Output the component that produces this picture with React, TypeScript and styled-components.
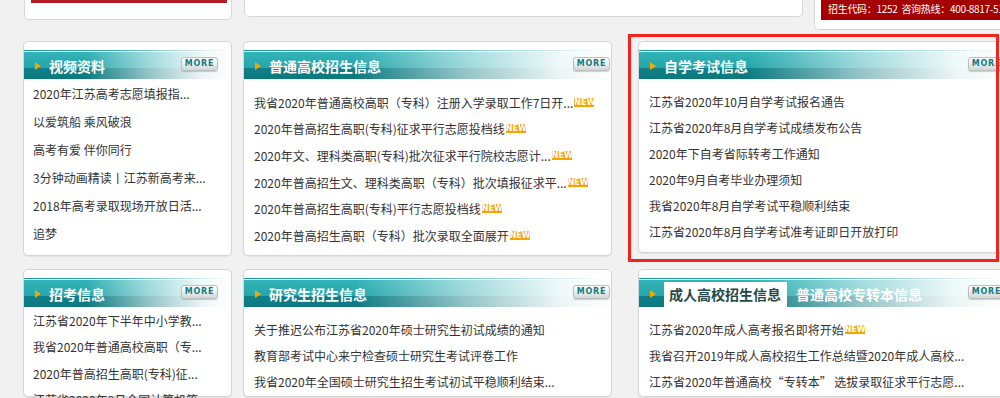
import React from 'react';
import styled, { createGlobalStyle } from 'styled-components';

const GlobalStyle = createGlobalStyle`
  html, body {
    margin: 0;
    padding: 0;
    background: #f1f1f1;
    overflow: hidden;
  }
  body {
    font-family: "Noto Sans CJK SC", "Noto Sans", sans-serif;
  }
  * {
    box-sizing: border-box;
  }
`;

const Page = styled.div`
  width: 1000px;
  height: 398px;
`;

const TopRow = styled.div`
  display: flex;
  align-items: flex-start;
  padding-left: 24px;
  height: 41px;
`;

const TopCard = styled.div<{ $w: number; $h: number; $ml: number }>`
  flex: none;
  width: ${(p) => p.$w}px;
  height: ${(p) => p.$h}px;
  margin-left: ${(p) => p.$ml}px;
  background: #fff;
  border: 1px solid #d6d6d6;
  border-top: none;
  border-radius: 0 0 5px 5px;
`;

const RedStrip = styled.div`
  height: 3px;
  margin: 0 4px 0 6px;
  background: #b21c22;
`;

const Banner = styled.div`
  height: 20px;
  margin-left: 6px;
  padding-left: 7px;
  background: #a50000;
  color: #fff;
  font-size: 10px;
  letter-spacing: -0.3px;
  line-height: 17px;
  white-space: nowrap;
  overflow: hidden;
`;

const Row = styled.div<{ $mt: number }>`
  display: flex;
  align-items: flex-start;
  gap: 11px;
  padding-left: 23px;
  margin-top: ${(p) => p.$mt}px;
`;

const Card = styled.div<{ $w: number; $h: number; $ml?: number; $highlight?: boolean }>`
  position: relative;
  flex: none;
  width: ${(p) => p.$w}px;
  height: ${(p) => p.$h}px;
  margin-left: ${(p) => p.$ml ?? 0}px;
  padding-top: 8px;
  background: #fff;
  border: 1px solid #d6d6d6;
  border-radius: 5px;
  box-shadow: 0 1px 0 #e2e2e2;

  ${(p) =>
    p.$highlight &&
    `
    &::after {
      content: '';
      position: absolute;
      left: -11px;
      top: -8px;
      right: 7px;
      bottom: -10px;
      border: 3px solid #f7231b;
      pointer-events: none;
    }
  `}
`;

const HeadLine = styled.div`
  padding-top: 2px;
  background: linear-gradient(to right, #14979c 0%, #37acb0 45%, #cfeced 85%, #ffffff 100%) top left / 100% 1px no-repeat;
`;

const Band = styled.div`
  display: flex;
  align-items: center;
  height: 27px;
  padding-left: 11px;
  background:
    linear-gradient(
      to right,
      rgba(255, 255, 255, 0) 0%,
      rgba(255, 255, 255, 0) 30%,
      rgba(255, 255, 255, 0.55) 60%,
      rgba(255, 255, 255, 0.92) 86%,
      #fff 100%
    ),
    linear-gradient(to bottom, #33b3b7 0%, #25a6ab 58%, #10818a 58%, #0c787d 100%);
`;

const Arrow = styled.span`
  flex: none;
  width: 0;
  height: 0;
  border-left: 6px solid #f2a800;
  border-top: 4.5px solid transparent;
  border-bottom: 4.5px solid transparent;
  margin-right: 8px;
`;

const Title = styled.span`
  color: #fff;
  font-size: 14px;
  font-weight: 700;
  line-height: 20px;
  white-space: nowrap;
`;

const Tab = styled.span<{ $active?: boolean }>`
  align-self: flex-end;
  height: 25px;
  padding: 0 6px 0 5px;
  margin-right: 4px;
  font-size: 14px;
  font-weight: 700;
  line-height: 24px;
  white-space: nowrap;
  color: ${(p) => (p.$active ? '#24484a' : '#fff')};
  background: ${(p) => (p.$active ? '#fff' : 'transparent')};
`;

const More = styled.span<{ $right: number }>`
  flex: none;
  align-self: flex-start;
  margin: 5px ${(p) => p.$right}px 0 auto;
  width: 37px;
  height: 14px;
  border: 1px solid #b9bfbf;
  border-radius: 3px;
  background: linear-gradient(to bottom, #ffffff 0%, #eef0f0 45%, #d2d6d6 100%);
  box-shadow: 0 1px 1px rgba(0, 0, 0, 0.18);
  color: #147a7f;
  font-family: "DejaVu Sans", sans-serif;
  font-size: 8px;
  font-weight: 700;
  letter-spacing: 0.8px;
  line-height: 12px;
  text-align: center;
`;

const List = styled.ul<{ $pt: number; $pl: number }>`
  list-style: none;
  margin: 0;
  padding: ${(p) => p.$pt}px 0 0 ${(p) => p.$pl}px;
`;

const Item = styled.li<{ $lh: number }>`
  display: flex;
  align-items: center;
  height: ${(p) => p.$lh}px;
  color: #333;
  font-size: 12px;
  white-space: nowrap;
`;

const NewBadge = styled.span`
  margin-left: 1px;
  width: 20px;
  height: 9px;
  background: #f6a500;
  color: #fff;
  font-family: "DejaVu Sans", sans-serif;
  font-size: 8px;
  font-weight: 700;
  line-height: 9px;
  text-align: center;
`;

type Link = { text: string; isNew?: boolean };

const videoLinks: Link[] = [
  { text: '2020年江苏高考志愿填报指...' },
  { text: '以爱筑船 乘风破浪' },
  { text: '高考有爱 伴你同行' },
  { text: '3分钟动画精读丨江苏新高考来...' },
  { text: '2018年高考录取现场开放日活...' },
  { text: '追梦' },
];

const generalLinks: Link[] = [
  { text: '我省2020年普通高校高职（专科）注册入学录取工作7日开...', isNew: true },
  { text: '2020年普高招生高职(专科)征求平行志愿投档线', isNew: true },
  { text: '2020年文、理科类高职(专科)批次征求平行院校志愿计...', isNew: true },
  { text: '2020年普高招生文、理科类高职（专科）批次填报征求平...', isNew: true },
  { text: '2020年普高招生高职(专科)平行志愿投档线', isNew: true },
  { text: '2020年普高招生高职（专科）批次录取全面展开', isNew: true },
];

const selfStudyLinks: Link[] = [
  { text: '江苏省2020年10月自学考试报名通告' },
  { text: '江苏省2020年8月自学考试成绩发布公告' },
  { text: '2020年下自考省际转考工作通知' },
  { text: '2020年9月自考毕业办理须知' },
  { text: '我省2020年8月自学考试平稳顺利结束' },
  { text: '江苏省2020年8月自学考试准考证即日开放打印' },
];

const examLinks: Link[] = [
  { text: '江苏省2020年下半年中小学教...' },
  { text: '我省2020年普通高校高职（专...' },
  { text: '2020年普高招生高职(专科)征...' },
  { text: '江苏省2020年9月全国计算机等...' },
];

const gradLinks: Link[] = [
  { text: '关于推迟公布江苏省2020年硕士研究生初试成绩的通知' },
  { text: '教育部考试中心来宁检查硕士研究生考试评卷工作' },
  { text: '我省2020年全国硕士研究生招生考试初试平稳顺利结束...' },
];

const adultLinks: Link[] = [
  { text: '江苏省2020年成人高考报名即将开始', isNew: true },
  { text: '我省召开2019年成人高校招生工作总结暨2020年成人高校...' },
  { text: '江苏省2020年普通高校“专转本” 选拔录取征求平行志愿...' },
];

const Links: React.FC<{ items: Link[]; pt: number; pl: number; lh: number }> = ({ items, pt, pl, lh }) => (
  <List $pt={pt} $pl={pl}>
    {items.map((l) => (
      <Item key={l.text} $lh={lh}>
        {l.text}
        {l.isNew && <NewBadge>NEW</NewBadge>}
      </Item>
    ))}
  </List>
);

const App: React.FC = () => {
  return (
    <Page>
      <GlobalStyle />
      <TopRow>
        <TopCard $w={208} $h={20} $ml={0}>
          <RedStrip />
        </TopCard>
        <TopCard $w={559} $h={17} $ml={12} />
        <TopCard $w={200} $h={30} $ml={11}>
          <Banner>招生代码：1252&nbsp;&nbsp;咨询热线：400-8817-51</Banner>
        </TopCard>
      </TopRow>

      <Row $mt={0}>
        <Card $w={209} $h={215}>
          <HeadLine>
            <Band>
              <Arrow />
              <Title>视频资料</Title>
              <More $right={13}>MORE</More>
            </Band>
          </HeadLine>
          <Links items={videoLinks} pt={0} pl={9} lh={28} />
        </Card>
        <Card $w={369} $h={215}>
          <HeadLine>
            <Band>
              <Arrow />
              <Title>普通高校招生信息</Title>
              <More $right={1}>MORE</More>
            </Band>
          </HeadLine>
          <Links items={generalLinks} pt={10} pl={10} lh={26.6} />
        </Card>
        <Card $w={369} $h={212} $ml={15} $highlight>
          <HeadLine>
            <Band>
              <Arrow />
              <Title>自学考试信息</Title>
              <More $right={1}>MORE</More>
            </Band>
          </HeadLine>
          <Links items={selfStudyLinks} pt={9} pl={10} lh={26} />
        </Card>
      </Row>

      <Row $mt={13}>
        <Card $w={209} $h={128}>
          <HeadLine>
            <Band>
              <Arrow />
              <Title>招考信息</Title>
              <More $right={13}>MORE</More>
            </Band>
          </HeadLine>
          <Links items={examLinks} pt={0} pl={9} lh={26.5} />
        </Card>
        <Card $w={369} $h={128}>
          <HeadLine>
            <Band>
              <Arrow />
              <Title>研究生招生信息</Title>
              <More $right={1}>MORE</More>
            </Band>
          </HeadLine>
          <Links items={gradLinks} pt={9} pl={10} lh={26} />
        </Card>
        <Card $w={369} $h={128} $ml={15}>
          <HeadLine>
            <Band>
              <Arrow />
              <Tab $active>成人高校招生信息</Tab>
              <Tab>普通高校专转本信息</Tab>
              <More $right={1}>MORE</More>
            </Band>
          </HeadLine>
          <Links items={adultLinks} pt={9} pl={10} lh={26} />
        </Card>
      </Row>
    </Page>
  );
};

export default App;
